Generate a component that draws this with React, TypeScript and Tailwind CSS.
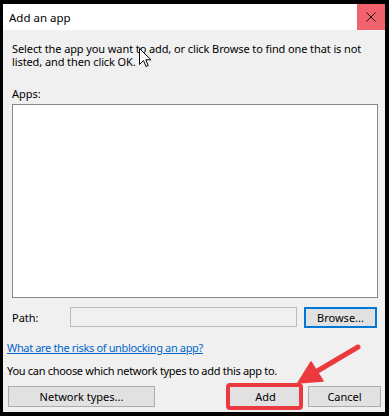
import React from "react";

const font = { fontFamily: '"Noto Sans", "Open Sans", sans-serif' };

export default function App() {
  return (
    <div className="relative w-[389px] h-[416px] bg-black pt-[4px] pl-[3px]" style={font}>
      <div className="w-[382px] h-[408px] bg-[#f0f0f0] flex flex-col text-[11px] text-black">
        {/* Title bar */}
        <div className="h-[26px] bg-white flex items-center justify-between shrink-0">
          <span className="pl-[6px] text-[11.5px] leading-[13px]">Add an app</span>
          <div className="w-[28px] h-full bg-[#f0626c] flex items-center justify-center">
            <svg width="10" height="10" viewBox="0 0 10 10">
              <path d="M0.5 0.5 L9.5 9.5 M9.5 0.5 L0.5 9.5" stroke="#111" strokeWidth="1" />
            </svg>
          </div>
        </div>

        {/* Description */}
        <div className="mt-[12px] pl-[9px] leading-[13px] whitespace-nowrap tracking-[-0.1px]">
          Select the app you want to add, or click Browse to find one that is not
          <br />
          listed, and then click OK.
        </div>

        <div className="mt-[19px] pl-[9px] leading-[13px]">Apps:</div>

        <div className="mt-[4px] ml-[9px] w-[366px] h-[194px] bg-white border border-[#828790]" />

        {/* Path row */}
        <div className="mt-[9px] h-[21px] flex items-center pl-[9px]">
          <span className="w-[58px] leading-[13px]">Path:</span>
          <div className="w-[227px] h-[20px] border border-[#bcbcbc] bg-[#f0f0f0] self-start" />
          <div className="ml-[7px] w-[73px] h-[21px] border-2 border-[#0078d7] bg-[#e1e1e1] flex items-center justify-center leading-[13px]">
            Browse...
          </div>
        </div>

        <div className="mt-[13px] pl-[4px] leading-[13px]">
          <span className="text-[#0066cc] underline tracking-[-0.35px]">What are the risks of unblocking an app?</span>
        </div>

        <div className="mt-[10px] pl-[4px] leading-[13px] tracking-[-0.3px]">
          You can choose which network types to add this app to.
        </div>

        {/* Buttons */}
        <div className="mt-[9px] flex items-center pl-[5px] pr-[4px]">
          <div className="w-[147px] h-[21px] border border-[#adadad] bg-[#e1e1e1] flex items-center justify-center leading-[13px]">
            Network types...
          </div>
          <div className="ml-auto w-[73px] h-[21px] border border-[#adadad] bg-[#e1e1e1] flex items-center justify-center leading-[13px]">
            Add
          </div>
          <div className="ml-[6px] w-[73px] h-[21px] border border-[#adadad] bg-[#e1e1e1] flex items-center justify-center leading-[13px]">
            Cancel
          </div>
        </div>
      </div>

      {/* Red highlight box around Add */}
      <div className="absolute left-[226px] top-[383px] w-[77px] h-[27px] border-[4px] border-[#ea3a40] rounded-[4px]" />

      {/* Annotation arrow */}
      <svg className="absolute left-0 top-0 pointer-events-none" width="389" height="416" viewBox="0 0 389 416">
        <line x1="358" y1="347" x2="314" y2="373" stroke="#ea3a40" strokeWidth="5" strokeLinecap="round" />
        <polygon points="298,383 311,362 323,381" fill="#ea3a40" stroke="#ea3a40" strokeWidth="1.5" strokeLinejoin="round" />
      </svg>

      {/* Mouse cursor */}
      <svg className="absolute left-[139px] top-[48px] pointer-events-none" width="13" height="20" viewBox="0 0 13 20">
        <path d="M0.5 0.5 L0.5 16.5 L4.5 12.5 L7 18.5 L9.2 17.6 L6.8 11.8 L12 11.8 Z" fill="white" stroke="black" strokeWidth="1" strokeLinejoin="miter" />
      </svg>
    </div>
  );
}
